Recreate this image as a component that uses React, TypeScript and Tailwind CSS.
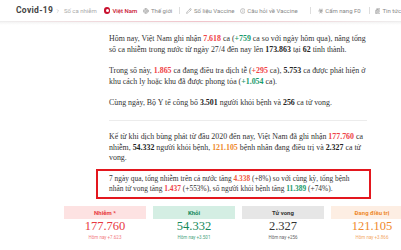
import { Globe, Pencil, Info, Biohazard, Newspaper, ChevronRight } from "lucide-react";

const R = ({ children }: { children: React.ReactNode }) => (
  <b className="font-bold text-[#ef4146]">{children}</b>
);
const G = ({ children }: { children: React.ReactNode }) => (
  <b className="font-bold text-[#17996a]">{children}</b>
);
const O = ({ children }: { children: React.ReactNode }) => (
  <b className="font-bold text-[#ee8a2b]">{children}</b>
);
const B = ({ children }: { children: React.ReactNode }) => (
  <b className="font-bold text-[#222]">{children}</b>
);

const stats = [
  { label: "Nhiễm *", value: "177.760", today: "Hôm nay +7.623", box: "bg-[#fde2e2] text-[#e8393f]", num: "text-[#e8393f]", sub: "text-[#f27b7f]" },
  { label: "Khỏi", value: "54.332", today: "Hôm nay +3.501", box: "bg-[#d4eee3] text-[#15895b]", num: "text-[#15895b]", sub: "text-[#4aa57f]" },
  { label: "Tử vong", value: "2.327", today: "Hôm nay +256", box: "bg-[#e6e6e6] text-[#333]", num: "text-[#333]", sub: "text-[#666]" },
  { label: "Đang điều trị", value: "121.105", today: "Hôm nay +3.866", box: "bg-[#fdeee3] text-[#ef8a2c]", num: "text-[#ef8a2c]", sub: "text-[#f3a866]" },
];

export default function App() {
  return (
    <div className="w-[401px] h-[250px] overflow-hidden bg-white font-['Roboto','Liberation_Sans',sans-serif]">
      {/* Nav */}
      <div className="h-[21px] flex items-center whitespace-nowrap text-[6px] text-[#888]">
        <span className="ml-[16px] text-[8.5px] font-bold tracking-[0.3px] text-[#444]">Covid-19</span>
        <ChevronRight className="ml-[2px] w-[6px] h-[6px] text-[#aaa]" />
        <span className="ml-[3px] text-[#aaa]">Số ca nhiễm</span>
        <span className="ml-[7px] w-[7px] h-[7px] rounded-full bg-[#c8102e] flex items-center justify-center">
          <span className="w-[3px] h-[3px] rounded-full bg-white" />
        </span>
        <span className="ml-[2px] text-[#c8102e] font-medium">Việt Nam</span>
        <Globe className="ml-[6px] w-[6px] h-[6px]" />
        <span className="ml-[2px]">Thế giới</span>
        <span className="ml-[7px] w-px h-[7px] bg-[#ddd]" />
        <Pencil className="ml-[6px] w-[6px] h-[6px]" />
        <span className="ml-[2px]">Số liệu Vaccine</span>
        <Info className="ml-[5px] w-[6px] h-[6px]" />
        <span className="ml-[2px]">Câu hỏi về Vaccine</span>
        <span className="ml-[12px] w-px h-[7px] bg-[#ddd]" />
        <Biohazard className="ml-[7px] w-[6px] h-[6px]" />
        <span className="ml-[2px]">Cẩm nang F0</span>
        <span className="ml-[8px] w-px h-[7px] bg-[#ddd]" />
        <Newspaper className="ml-[5px] w-[6px] h-[6px]" />
        <span className="ml-[2px]">Tin tức</span>
      </div>
      <div className="h-px bg-gradient-to-r from-[#eee] via-[#f0c4cb] to-[#eee]" />
      <div className="h-[3px] bg-gradient-to-b from-[#f4f4f4] to-white" />

      {/* Article */}
      <div className="ml-[109px] w-[258px] whitespace-nowrap font-['Liberation_Serif',serif] text-[7.9px] leading-[10.6px] text-[#333]">
        <p className="mt-[9px]">
          Hôm nay, Việt Nam ghi nhận <R>7.618</R> ca (<G>+759</G> ca so với ngày hôm qua), nâng tổng
          <br />
          số ca nhiễm trong nước từ ngày 27/4 đến nay lên <B>173.863</B> tại <B>62</B> tỉnh thành.
        </p>
        <p className="mt-[11px]">
          Trong số này, <R>1.865</R> ca đang điều tra dịch tễ (<R>+295</R> ca), <B>5.753</B> ca được phát hiện ở
          <br />
          khu cách ly hoặc khu đã được phong tỏa (<G>+1.054</G> ca).
        </p>
        <p className="mt-[11px]">
          Cùng ngày, Bộ Y tế công bố <B>3.501</B> người khỏi bệnh và <B>256</B> ca tử vong.
        </p>
        <div className="mt-[11px] h-px bg-[#ececec]" />
        <p className="mt-[11px]">
          Kể từ khi dịch bùng phát từ đầu 2020 đến nay, Việt Nam đã ghi nhận <R>177.760</R> ca
          <br />
          nhiễm, <B>54.332</B> người khỏi bệnh, <O>121.105</O> bệnh nhân đang điều trị và <B>2.327</B> ca tử
          <br />
          vong.
        </p>
      </div>

      {/* Highlight box */}
      <div className="mt-[5px] ml-[96px] w-[275px] border-2 border-[#e3171e] px-[11px] py-[3px] whitespace-nowrap font-['Liberation_Serif',serif] text-[7.4px] leading-[10px] text-[#333]">
        7 ngày qua, tổng nhiễm trên cả nước tăng <b className="font-bold text-[#f0573c]">4.338</b> (+8%) so với cùng kỳ, tổng bệnh
        <br />
        nhân tử vong tăng <R>1.437</R> (+553%), số người khỏi bệnh tăng <G>11.389</G> (+74%).
      </div>

      {/* Stats */}
      <div className="mt-[7px] ml-[64px] flex gap-[7px]">
        {stats.map((s) => (
          <div key={s.label} className="w-[82px] shrink-0 flex flex-col items-center">
            <div className={`w-full h-[13px] flex items-center justify-center text-[6px] font-bold ${s.box}`}>
              {s.label}
            </div>
            <div className={`font-['Liberation_Serif',serif] text-[12.5px] leading-[15px] ${s.num}`}>{s.value}</div>
            <div className={`text-[4.5px] leading-[6px] mt-[1px] ${s.sub}`}>{s.today}</div>
          </div>
        ))}
      </div>
    </div>
  );
}
